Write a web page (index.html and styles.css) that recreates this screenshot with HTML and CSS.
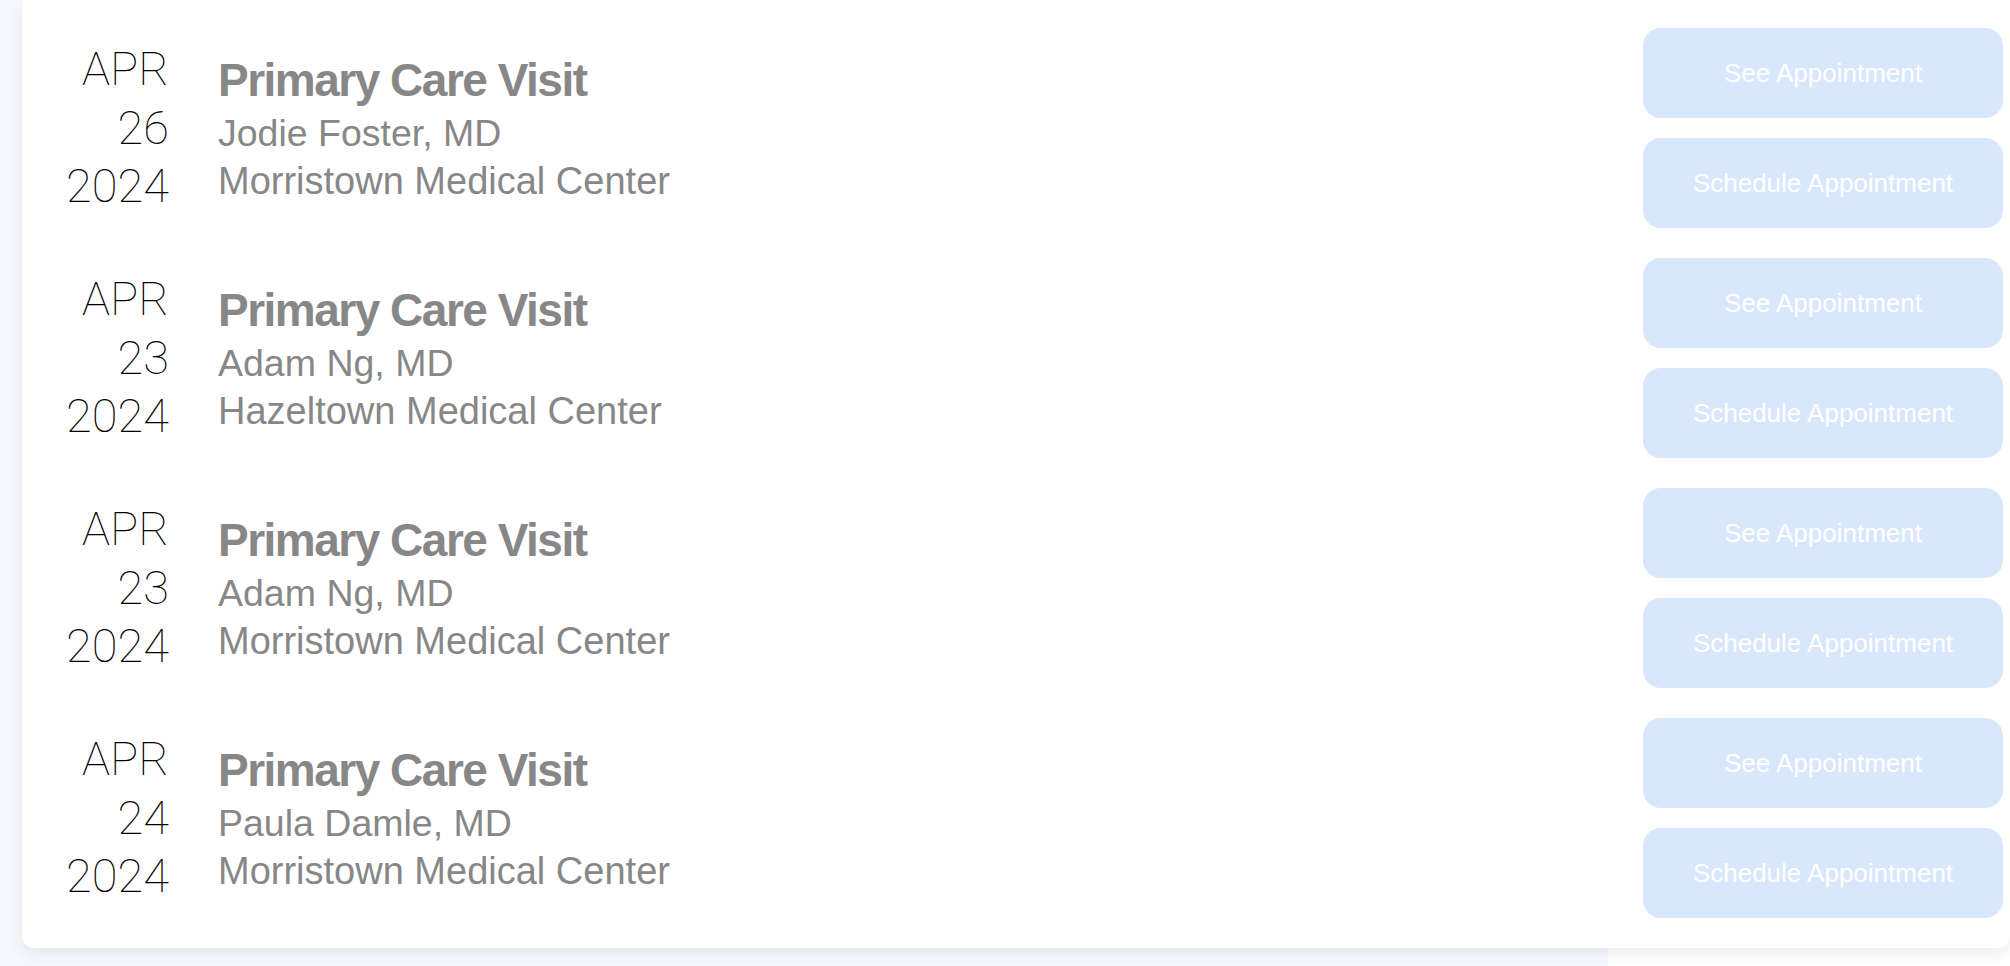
FILE: index.html
```html
<!DOCTYPE html>
<html lang="en">
<head>
<meta charset="utf-8">
<title>Appointments</title>
<link rel="stylesheet" href="styles.css">
</head>
<body>
<div class="page">
  <section class="card">
    <div class="row">
      <div class="date"><div>APR</div><div>26</div><div>2024</div></div>
      <div class="info">
        <div class="title">Primary Care Visit</div>
        <div class="doctor">Jodie Foster, MD</div>
        <div class="place">Morristown Medical Center</div>
      </div>
      <div class="actions">
        <button class="btn">See Appointment</button>
        <button class="btn">Schedule Appointment</button>
      </div>
    </div>
    <div class="row">
      <div class="date"><div>APR</div><div>23</div><div>2024</div></div>
      <div class="info">
        <div class="title">Primary Care Visit</div>
        <div class="doctor">Adam Ng, MD</div>
        <div class="place">Hazeltown Medical Center</div>
      </div>
      <div class="actions">
        <button class="btn">See Appointment</button>
        <button class="btn">Schedule Appointment</button>
      </div>
    </div>
    <div class="row">
      <div class="date"><div>APR</div><div>23</div><div>2024</div></div>
      <div class="info">
        <div class="title">Primary Care Visit</div>
        <div class="doctor">Adam Ng, MD</div>
        <div class="place">Morristown Medical Center</div>
      </div>
      <div class="actions">
        <button class="btn">See Appointment</button>
        <button class="btn">Schedule Appointment</button>
      </div>
    </div>
    <div class="row">
      <div class="date"><div>APR</div><div>24</div><div>2024</div></div>
      <div class="info">
        <div class="title">Primary Care Visit</div>
        <div class="doctor">Paula Damle, MD</div>
        <div class="place">Morristown Medical Center</div>
      </div>
      <div class="actions">
        <button class="btn">See Appointment</button>
        <button class="btn">Schedule Appointment</button>
      </div>
    </div>
  </section>
</div>
</body>
</html>
```
FILE: styles.css
```css
html, body {
  margin: 0;
  padding: 0;
}
body {
  width: 2010px;
  height: 966px;
  overflow: hidden;
  background: linear-gradient(to right, #f5f9fe 0, #f5f9fe 1608px, #ffffff 1608px);
  font-family: "Liberation Sans", Arial, sans-serif;
}
.page {
  padding-left: 22px;
}
.card {
  background: #ffffff;
  border-radius: 0 0 12px 12px;
  box-shadow: 0 6px 16px rgba(0, 0, 0, 0.07);
  padding: 28px 7px 30px 20px;
  display: flex;
  flex-direction: column;
  gap: 30px;
}
.row {
  display: flex;
  align-items: center;
  height: 200px;
}
.date {
  width: 127px;
  text-align: right;
  font-family: Roboto, "Liberation Sans", sans-serif;
  font-weight: 250;
  font-size: 47px;
  line-height: 58.5px;
  letter-spacing: 0;
  color: #000;
  margin-right: 49px;
}
.info {
  flex: 1;
  color: #878787;
}
.title {
  font-weight: bold;
  font-size: 46px;
  line-height: 58px;
  letter-spacing: -1.5px;
}
.doctor {
  font-size: 37.5px;
  line-height: 48px;
}
.place {
  font-size: 38px;
  line-height: 48px;
}
.actions {
  display: flex;
  flex-direction: column;
  gap: 20px;
}
.btn {
  width: 360px;
  height: 90px;
  border: none;
  border-radius: 18px;
  background: #d9e7fc;
  color: #ffffff;
  font-family: "Liberation Sans", Arial, sans-serif;
  font-size: 26px;
  padding: 0;
}
```
